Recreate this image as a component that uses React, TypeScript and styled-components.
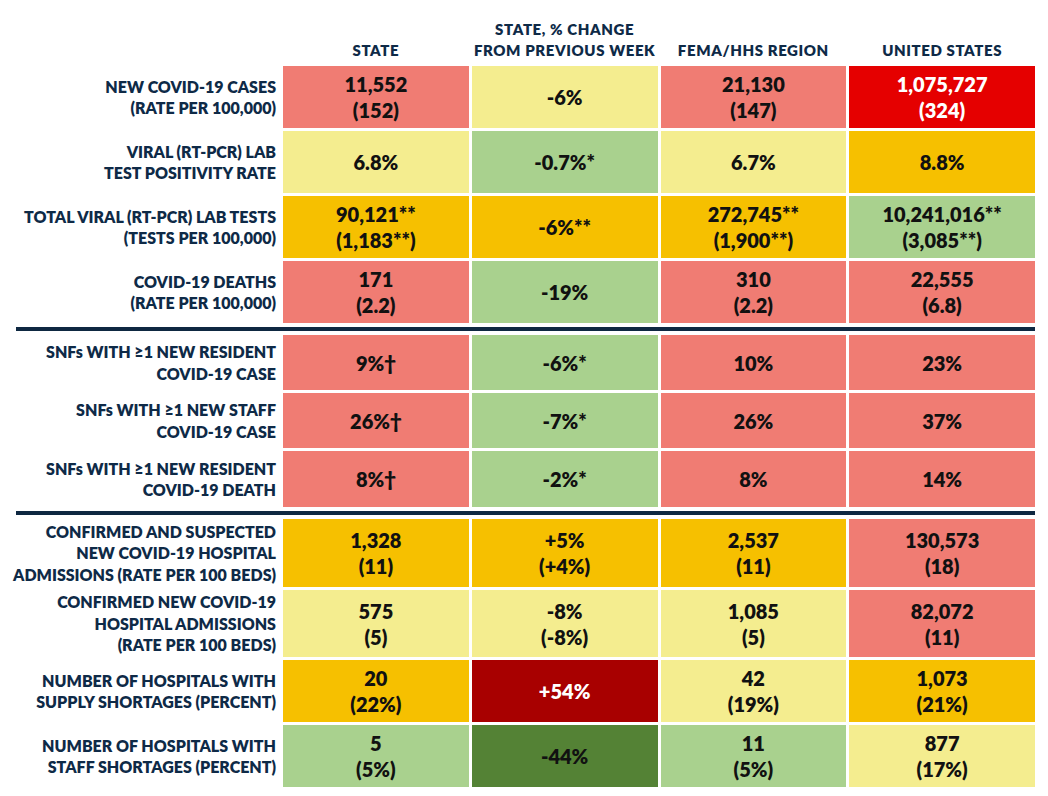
import React, { FC } from 'react';
import styled, { createGlobalStyle } from 'styled-components';

const GlobalStyle = createGlobalStyle`
  body {
    margin: 0;
    background: #ffffff;
    font-family: Lato, "Open Sans", sans-serif;
  }
`;

type Tone = 'salmon' | 'yellow' | 'green' | 'orange' | 'red' | 'darkRed' | 'darkGreen';

const tones: Record<Tone, { bg: string; fg: string }> = {
  salmon: { bg: '#F07C73', fg: '#111111' },
  yellow: { bg: '#F4ED8F', fg: '#111111' },
  green: { bg: '#A9D18E', fg: '#111111' },
  orange: { bg: '#F6C000', fg: '#111111' },
  red: { bg: '#E50000', fg: '#ffffff' },
  darkRed: { bg: '#A80000', fg: '#ffffff' },
  darkGreen: { bg: '#548235', fg: '#111111' },
};

interface CellData {
  tone: Tone;
  lines: string[];
}

interface RowData {
  label: string[];
  height: number;
  cells: CellData[];
}

const c = (tone: Tone, ...lines: string[]): CellData => ({ tone, lines });

const sections: RowData[][] = [
  [
    {
      label: ['NEW COVID-19 CASES', '(RATE PER 100,000)'],
      height: 62,
      cells: [
        c('salmon', '11,552', '(152)'),
        c('yellow', '-6%'),
        c('salmon', '21,130', '(147)'),
        c('red', '1,075,727', '(324)'),
      ],
    },
    {
      label: ['VIRAL (RT-PCR) LAB', 'TEST POSITIVITY RATE'],
      height: 62,
      cells: [c('yellow', '6.8%'), c('green', '-0.7%*'), c('yellow', '6.7%'), c('orange', '8.8%')],
    },
    {
      label: ['TOTAL VIRAL (RT-PCR) LAB TESTS', '(TESTS PER 100,000)'],
      height: 62,
      cells: [
        c('orange', '90,121**', '(1,183**)'),
        c('orange', '-6%**'),
        c('orange', '272,745**', '(1,900**)'),
        c('green', '10,241,016**', '(3,085**)'),
      ],
    },
    {
      label: ['COVID-19 DEATHS', '(RATE PER 100,000)'],
      height: 62,
      cells: [
        c('salmon', '171', '(2.2)'),
        c('green', '-19%'),
        c('salmon', '310', '(2.2)'),
        c('salmon', '22,555', '(6.8)'),
      ],
    },
  ],
  [
    {
      label: ['SNFs WITH ≥1 NEW RESIDENT', 'COVID-19 CASE'],
      height: 55,
      cells: [c('salmon', '9%†'), c('green', '-6%*'), c('salmon', '10%'), c('salmon', '23%')],
    },
    {
      label: ['SNFs WITH ≥1 NEW STAFF', 'COVID-19 CASE'],
      height: 55,
      cells: [c('salmon', '26%†'), c('green', '-7%*'), c('salmon', '26%'), c('salmon', '37%')],
    },
    {
      label: ['SNFs WITH ≥1 NEW RESIDENT', 'COVID-19 DEATH'],
      height: 56,
      cells: [c('salmon', '8%†'), c('green', '-2%*'), c('salmon', '8%'), c('salmon', '14%')],
    },
  ],
  [
    {
      label: ['CONFIRMED AND SUSPECTED', 'NEW COVID-19 HOSPITAL', 'ADMISSIONS (RATE PER 100 BEDS)'],
      height: 68,
      cells: [
        c('orange', '1,328', '(11)'),
        c('orange', '+5%', '(+4%)'),
        c('orange', '2,537', '(11)'),
        c('salmon', '130,573', '(18)'),
      ],
    },
    {
      label: ['CONFIRMED NEW COVID-19', 'HOSPITAL ADMISSIONS', '(RATE PER 100 BEDS)'],
      height: 67,
      cells: [
        c('yellow', '575', '(5)'),
        c('yellow', '-8%', '(-8%)'),
        c('yellow', '1,085', '(5)'),
        c('salmon', '82,072', '(11)'),
      ],
    },
    {
      label: ['NUMBER OF HOSPITALS WITH', 'SUPPLY SHORTAGES (PERCENT)'],
      height: 62,
      cells: [
        c('orange', '20', '(22%)'),
        c('darkRed', '+54%'),
        c('yellow', '42', '(19%)'),
        c('orange', '1,073', '(21%)'),
      ],
    },
    {
      label: ['NUMBER OF HOSPITALS WITH', 'STAFF SHORTAGES (PERCENT)'],
      height: 62,
      cells: [
        c('green', '5', '(5%)'),
        c('darkGreen', '-44%'),
        c('green', '11', '(5%)'),
        c('yellow', '877', '(17%)'),
      ],
    },
  ],
];

const headers = [['STATE'], ['STATE, % CHANGE', 'FROM PREVIOUS WEEK'], ['FEMA/HHS REGION'], ['UNITED STATES']];

const Table = styled.div`
  width: 1035px;
  display: flex;
  flex-direction: column;
`;

const Grid = styled.div`
  display: grid;
  grid-template-columns: 280px repeat(4, 1fr);
  column-gap: 3px;
`;

const HeaderRow = styled(Grid)`
  height: 66px;
  align-items: end;
  padding-bottom: 5px;
  box-sizing: border-box;
`;

const HeaderCell = styled.div`
  text-align: center;
  color: #0E2A47;
  font-size: 15px;
  font-weight: 800;
  letter-spacing: 0.6px;
  line-height: 21px;
`;

const Section = styled.div`
  display: flex;
  flex-direction: column;
  gap: 3px;
`;

const Row = styled(Grid)<{ $h: number }>`
  height: ${p => p.$h}px;
`;

const Label = styled.div`
  display: flex;
  flex-direction: column;
  justify-content: center;
  align-items: flex-end;
  text-align: right;
  padding-right: 4px;
  color: #0E2A47;
  font-size: 16px;
  font-weight: 800;
  line-height: 21.5px;
  white-space: nowrap;
`;

const Cell = styled.div<{ $tone: Tone }>`
  display: flex;
  flex-direction: column;
  justify-content: center;
  align-items: center;
  background: ${p => tones[p.$tone].bg};
  color: ${p => tones[p.$tone].fg};
  font-size: 20px;
  font-weight: 800;
  line-height: 26px;
  white-space: nowrap;
`;

const Divider = styled.div`
  margin: 4px 0 4px 16px;
  height: 4px;
  background: #0E2841;
`;

const App: FC = () => {
  return (
    <>
      <GlobalStyle />
      <Table>
        <HeaderRow>
          <div />
          {headers.map((h, i) => (
            <HeaderCell key={i}>
              {h.map(line => (
                <div key={line}>{line}</div>
              ))}
            </HeaderCell>
          ))}
        </HeaderRow>
        {sections.map((rows, si) => (
          <React.Fragment key={si}>
            {si > 0 && <Divider />}
            <Section>
              {rows.map((row, ri) => (
                <Row key={ri} $h={row.height}>
                  <Label>
                    {row.label.map(line => (
                      <span key={line}>{line}</span>
                    ))}
                  </Label>
                  {row.cells.map((cell, ci) => (
                    <Cell key={ci} $tone={cell.tone}>
                      {cell.lines.map(line => (
                        <span key={line}>{line}</span>
                      ))}
                    </Cell>
                  ))}
                </Row>
              ))}
            </Section>
          </React.Fragment>
        ))}
      </Table>
    </>
  );
};

export default App;
